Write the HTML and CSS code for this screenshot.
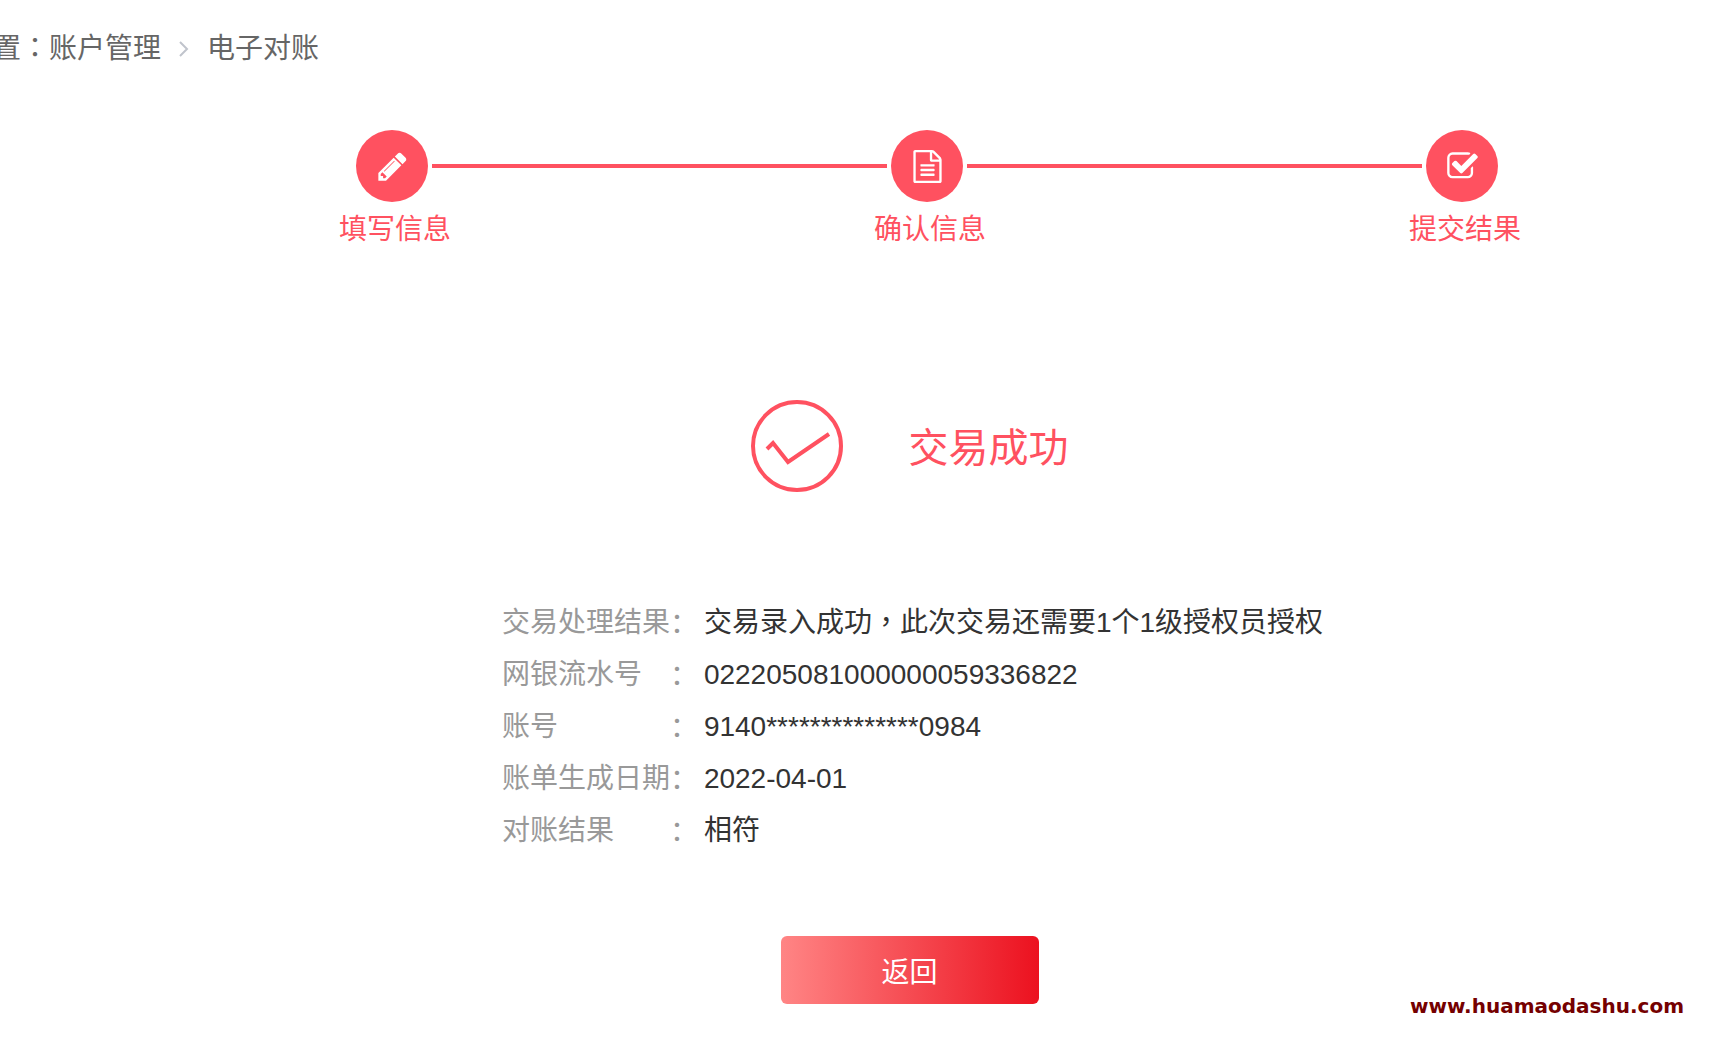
FILE: index.html
```html
<!DOCTYPE html>
<html lang="zh-CN">
<head>
    <meta charset="UTF-8">
    <meta name="viewport" content="width=device-width, initial-scale=1.0">
    <title>电子对账</title>
    <link rel="stylesheet" href="styles.css">
</head>
<body>
    <nav class="breadcrumb">
        <span>置<span class="punct" lang="zh-TW">：</span>账户管理</span>
        <svg class="arrow" viewBox="0 0 10 16"><path d="M1 1l7 7-7 7"/></svg>
        <span>电子对账</span>
    </nav>

    <main>
        <ol class="steps">
            <li class="step">
                <span class="step-icon">
                    <svg viewBox="0 0 1792 1792"><path d="M491 1536l91-91-235-235-91 91v107h128v128h107zm523-928q0-22-22-22-10 0-17 7l-542 542q-7 7-7 17 0 22 22 22 10 0 17-7l542-542q7-7 7-17zm-54-192l416 416-832 832h-416v-416zm683 96q0 53-37 90l-166 166-416-416 166-165q36-38 90-38 53 0 91 38l235 234q37 39 37 91z"/></svg>
                </span>
                <span class="step-name">填写信息</span>
            </li>
            <li class="line"></li>
            <li class="step">
                <span class="step-icon">
                    <svg viewBox="0 0 1792 1792"><path d="M1596 380q28 28 48 76t20 88v1152q0 40-28 68t-68 28h-1344q-40 0-68-28t-28-68v-1600q0-40 28-68t68-28h896q40 0 88 20t76 48zm-444-244v376h376q-10-29-22-41l-313-313q-12-12-41-22zm384 1528v-1024h-416q-40 0-68-28t-28-68v-416h-768v1536h1280zm-1024-864q0-14 9-23t23-9h704q14 0 23 9t9 23v64q0 14-9 23t-23 9h-704q-14 0-23-9t-9-23v-64zm736 224q14 0 23 9t9 23v64q0 14-9 23t-23 9h-704q-14 0-23-9t-9-23v-64q0-14 9-23t23-9h704zm0 256q14 0 23 9t9 23v64q0 14-9 23t-23 9h-704q-14 0-23-9t-9-23v-64q0-14 9-23t23-9h704z"/></svg>
                </span>
                <span class="step-name">确认信息</span>
            </li>
            <li class="line"></li>
            <li class="step">
                <span class="step-icon">
                    <svg viewBox="0 0 1792 1792"><path d="M1472 930v318q0 119-84.500 203.500t-203.500 84.500h-832q-119 0-203.500-84.500t-84.500-203.500v-832q0-119 84.500-203.500t203.500-84.500h832q63 0 117 25 15 7 18 23 3 17-9 29l-49 49q-10 10-23 10-3 0-9-2-23-6-45-6h-832q-66 0-113 47t-47 113v832q0 66 47 113t113 47h832q66 0 113-47t47-113v-254q0-13 9-22l64-64q10-10 23-10 6 0 12 3 20 8 20 29zm231-489l-814 814q-24 24-57 24t-57-24l-430-430q-24-24-24-57t24-57l110-110q24-24 57-24t57 24l263 263 647-647q24-24 57-24t57 24l110 110q24 24 24 57t-24 57z"/></svg>
                </span>
                <span class="step-name">提交结果</span>
            </li>
        </ol>

        <div class="result">
            <svg viewBox="0 0 92 92">
                <circle cx="46" cy="46" r="44"/>
                <path d="M16 49l6-6 15 19 41-28"/>
            </svg>
            <h1>交易成功</h1>
        </div>

        <dl class="details">
            <dt>交易处理结果<span>：</span></dt>
            <dd>交易录入成功<span class="punct" lang="zh-TW">，</span>此次交易还需要1个1级授权员授权</dd>
            <dt>网银流水号<span>：</span></dt>
            <dd>022205081000000059336822</dd>
            <dt>账号<span>：</span></dt>
            <dd>9140**************0984</dd>
            <dt>账单生成日期<span>：</span></dt>
            <dd>2022-04-01</dd>
            <dt>对账结果<span>：</span></dt>
            <dd>相符</dd>
        </dl>

        <button type="button" class="back">返回</button>
    </main>

    <div class="watermark">www.huamaodashu.com</div>
</body>
</html>
```
FILE: styles.css
```css
body {
    position: relative;
    margin: 0;
    min-height: 100vh;
    background-color: #fff;
    font-family: "Liberation Sans", "Noto Sans CJK SC", sans-serif;
    font-size: 28px;
    line-height: 40px;
    color: #333;
    overflow-x: hidden;
}

/* 全角标点居中 */
.punct {
    font-family: "Noto Sans CJK TC", sans-serif;
    line-height: 1;
}

/* 面包屑 */
.breadcrumb {
    display: flex;
    align-items: center;
    gap: 18px;
    margin-left: -7px;
    padding-top: 29px;
    color: #666;
}

.breadcrumb .arrow {
    width: 10px;
    height: 16px;
    fill: none;
    stroke: #c0c4cc;
    stroke-width: 2;
}

main {
    margin-left: 105px;
}

/* 步骤条 */
.steps {
    display: flex;
    list-style: none;
    margin: 61px 216px 0 251px;
    padding: 0;
    color: #ff5160;
}

.step {
    width: 72px;
}

.step-icon {
    display: flex;
    justify-content: center;
    align-items: center;
    height: 72px;
    border-radius: 50%;
    background-color: #ff5160;
}

.step-icon svg {
    width: 33px;
    height: 33px;
    fill: #fff;
}

.step-name {
    display: block;
    margin: 8px 0 0 -17px;
    white-space: nowrap;
}

.line {
    flex: 1;
    height: 4px;
    margin: 34px 4px 0;
    background-color: #ff5160;
}

/* 交易结果 */
.result {
    display: flex;
    justify-content: center;
    align-items: center;
    gap: 66px;
    margin-top: 150px;
}

.result svg {
    width: 92px;
    height: 92px;
    fill: none;
    stroke: #ff5160;
    stroke-width: 4;
}

.result h1 {
    margin: 4px 0 0;
    font-size: 40px;
    font-weight: 400;
    color: #ff5160;
}

/* 交易明细 */
.details {
    display: grid;
    grid-template-columns: 196px auto;
    gap: 12px 6px;
    width: fit-content;
    margin: 111px auto 0;
    padding-left: 6px;
}

.details dt {
    display: flex;
    justify-content: space-between;
    white-space: nowrap;
    color: #999;
}

.details dt span {
    padding-top: 2px;
    line-height: 38px;
}

.details dd {
    margin: 0;
}

.back {
    display: block;
    width: 258px;
    height: 68px;
    margin: 85px auto 0;
    border: none;
    border-radius: 6px;
    background: linear-gradient(to right, #ff8585, #ec111f);
    color: #fff;
    font-family: inherit;
    font-size: 28px;
    cursor: pointer;
}

.watermark {
    position: absolute;
    right: 30px;
    bottom: 18px;
    font-family: "DejaVu Sans", sans-serif;
    font-size: 20px;
    font-weight: bold;
    color: #750000;
}
```
